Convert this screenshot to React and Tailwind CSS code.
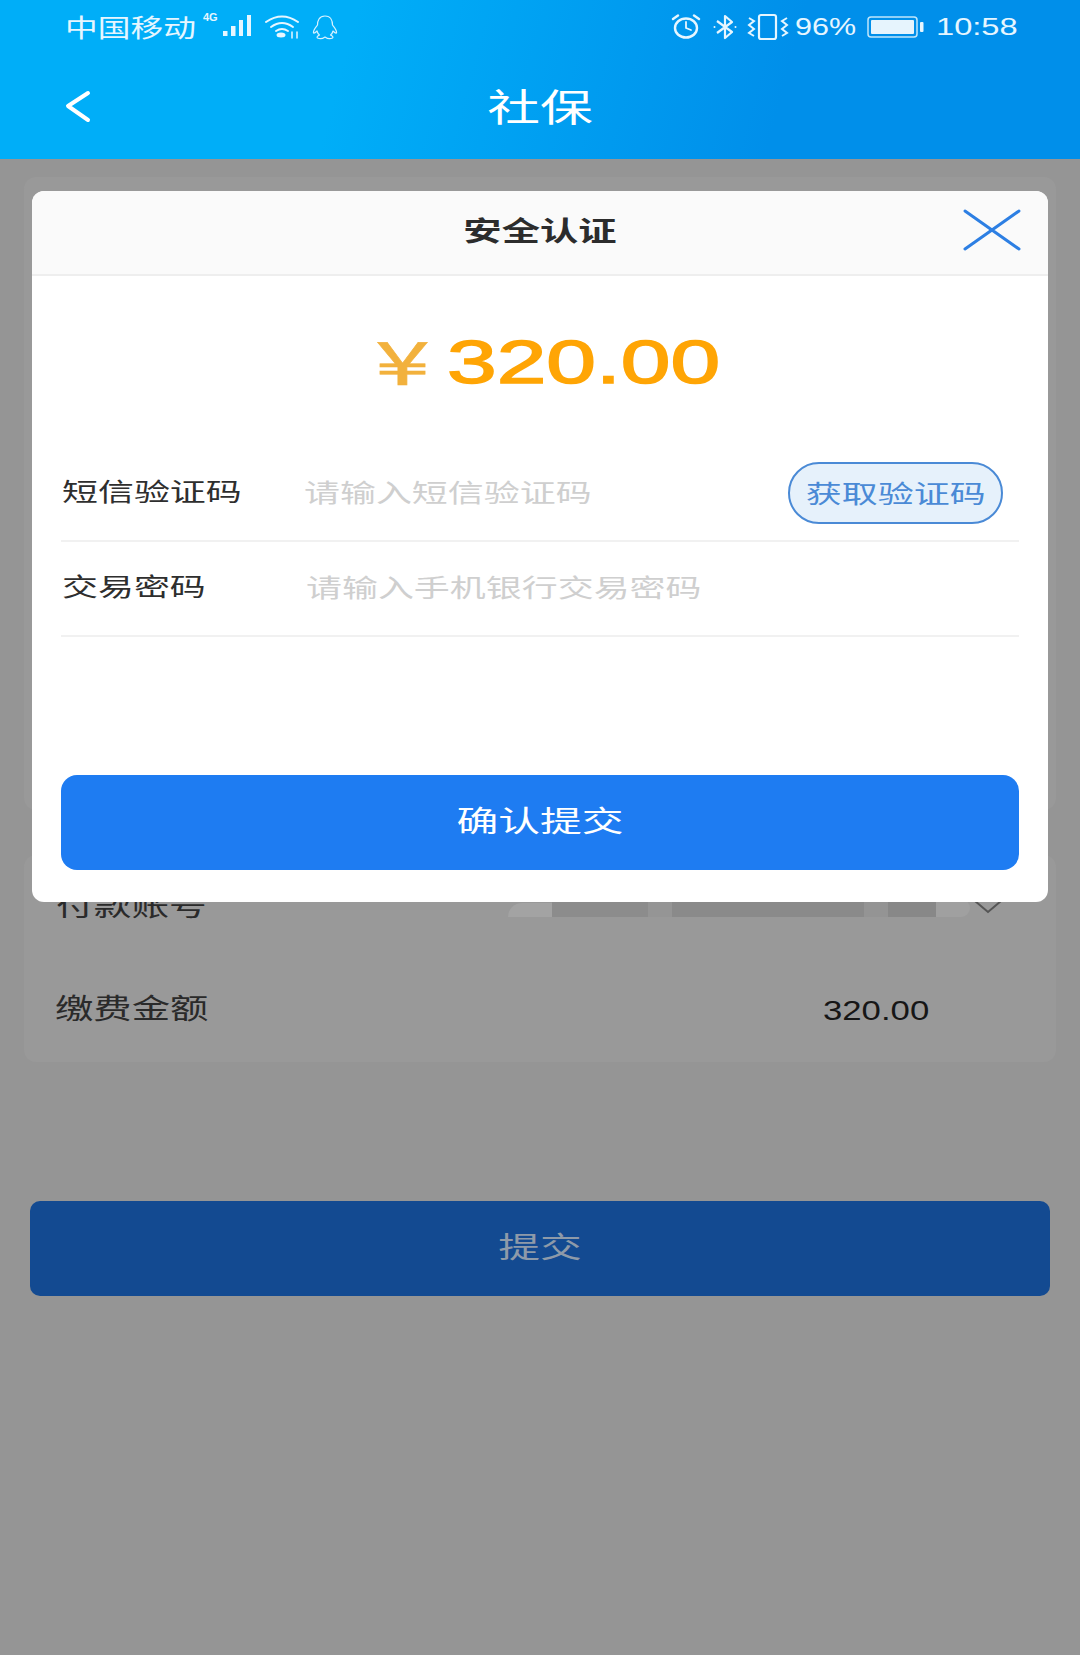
const CJK = "font-['Noto_Sans_CJK_SC','Noto_Sans',sans-serif]";

function SignalIcon() {
  return (
    <svg width="50" height="30" viewBox="0 0 50 30" fill="none">
      <text x="0" y="11" fontSize="11" fontWeight="700" fill="#e6f6ff" fontFamily="Liberation Sans">4G</text>
      <rect x="20" y="21" width="4.5" height="5" fill="#e6f6ff" />
      <rect x="28" y="16" width="4.5" height="10" fill="#e6f6ff" />
      <rect x="36" y="10" width="4" height="16" fill="#e6f6ff" />
      <rect x="44" y="5" width="4" height="21" fill="#e6f6ff" />
    </svg>
  );
}

function WifiIcon() {
  return (
    <svg width="38" height="26" viewBox="0 0 38 26" fill="none" stroke="#e6f6ff" strokeWidth="2" strokeLinecap="round">
      <path d="M2 8 Q18 -3 34 8" />
      <path d="M7 13 Q18 5 29 13" />
      <path d="M12 17 Q18 13 24 17" />
      <ellipse cx="17" cy="21" rx="4.5" ry="2.5" fill="#e6f6ff" stroke="none" />
      <path d="M28 18 L28 24 M33 18 L33 24" strokeWidth="1.5" />
    </svg>
  );
}

function QqIcon() {
  return (
    <svg width="28" height="26" viewBox="0 0 28 26" fill="none" stroke="#d9f2ff" strokeWidth="1.2" strokeLinejoin="round">
      <path d="M14 2 C8 2 6.5 7 6.5 11 C5 13 2 16 2.5 19 C4 19.5 5 18 6 17 C6.5 19 7 20 8.5 21 C6.5 22 5.5 23 6.5 24 C8.5 25 12 24.5 14 23 C16 24.5 19.5 25 21.5 24 C22.5 23 21.5 22 19.5 21 C21 20 21.5 19 22 17 C23 18 24 19.5 25.5 19 C26 16 23 13 21.5 11 C21.5 7 20 2 14 2 Z" />
    </svg>
  );
}

function AlarmIcon() {
  return (
    <svg width="30" height="26" viewBox="0 0 30 26" fill="none" stroke="#e6f6ff" strokeWidth="2.4" strokeLinecap="round">
      <ellipse cx="15" cy="14" rx="11" ry="9.5" />
      <path d="M15 8 L15 14 L20 16" strokeWidth="1.8" />
      <path d="M2 5 L7 1.5 M28 5 L23 1.5" />
    </svg>
  );
}

function BluetoothIcon() {
  return (
    <svg width="24" height="26" viewBox="0 0 24 26" fill="none" stroke="#e6f6ff" strokeWidth="2.2" strokeLinejoin="round">
      <path d="M4 7 L19 18 L12 24 L12 2 L19 8 L4 19" />
      <circle cx="1.5" cy="13" r="1" fill="#e6f6ff" stroke="none" />
      <circle cx="22.5" cy="13" r="1" fill="#e6f6ff" stroke="none" />
    </svg>
  );
}

function VibrateIcon() {
  return (
    <svg width="42" height="28" viewBox="0 0 42 28" fill="none" stroke="#e6f6ff" strokeWidth="2.2">
      <rect x="12" y="2" width="17" height="24" rx="2" />
      <path d="M2 5 L7 8 L2 12 L7 16 L2 20 L7 23" strokeWidth="2" />
      <path d="M40 5 L35 8 L40 12 L35 16 L40 20 L35 23" strokeWidth="2" />
    </svg>
  );
}

function BatteryIcon() {
  return (
    <svg width="58" height="22" viewBox="0 0 58 22" fill="none">
      <rect x="1" y="1" width="49" height="20" rx="3" stroke="#bfe6fb" strokeWidth="1.5" />
      <rect x="4" y="4" width="43" height="14" rx="1" fill="#e6f4fd" />
      <rect x="53" y="6" width="3.5" height="10" rx="1" fill="#e6f6ff" />
    </svg>
  );
}

function Stretched({ className = '', children }) {
  return <span className={`inline-block whitespace-nowrap ${className}`}>{children}</span>;
}

function FormRow({ label, placeholder, phLeft, children }) {
  return (
    <div className="relative flex h-[95px] items-center border-b-2 border-[#f1f1f1] pb-[7px]">
      <Stretched className={`ml-[1px] origin-left scale-x-[1.41] text-[25.5px] text-[#2e2e2e] ${CJK}`}>{label}</Stretched>
      <span
        className={`absolute top-[44px] origin-left -translate-y-1/2 scale-x-[1.41] whitespace-nowrap text-[25.5px] text-[#cfcfcf] ${phLeft} ${CJK}`}
      >
        {placeholder}
      </span>
      {children}
    </div>
  );
}

const mosaic = [
  'w-[96px] bg-[#8c8c8c]',
  'w-[24px] bg-[#959595]',
  'w-[192px] bg-[#8a8a8a]',
  'w-[24px] bg-[#949494]',
  'w-[48px] bg-[#888888]',
  'w-[34px] rounded-r-[14px] bg-[#a0a0a0]',
];

export default function App() {
  return (
    <div className={`relative h-[1655px] w-[1080px] overflow-hidden bg-[#959595] ${CJK}`}>
      <header className="flex h-[159px] flex-col bg-linear-[105deg,#00aef8_32%,#008fea_72%] px-[65px]">
        <div className="flex h-[54px] items-center justify-between">
          <div className="flex items-center">
            <Stretched className="w-[133px] origin-left scale-x-[1.31] text-[25px] text-[#e6f6ff]">中国移动</Stretched>
            <span className="-mt-[4px] ml-[5px] flex"><SignalIcon /></span>
            <span className="ml-[11px] flex"><WifiIcon /></span>
            <span className="ml-[9px] flex"><QqIcon /></span>
          </div>
          <div className="-mr-[3px] flex items-center font-['Liberation_Sans',sans-serif] text-[#e6f6ff]">
            <AlarmIcon />
            <span className="ml-[12px] flex"><BluetoothIcon /></span>
            <span className="ml-[10px] flex"><VibrateIcon /></span>
            <Stretched className="ml-[6px] w-[61px] origin-left scale-x-[1.27] text-[24px]">96%</Stretched>
            <span className="ml-[11px] flex"><BatteryIcon /></span>
            <Stretched className="ml-[11px] w-[82px] origin-left scale-x-[1.36] text-[24px]">10:58</Stretched>
          </div>
        </div>
        <div className="relative flex flex-1 items-center justify-center pb-[5px]">
          <svg className="absolute left-0 top-[36px]" width="26" height="34" viewBox="0 0 26 34" fill="none" stroke="#ffffff" strokeWidth="4" strokeLinecap="round" strokeLinejoin="round">
            <path d="M23 3 L3 16 L23 30" />
          </svg>
          <Stretched className="scale-x-[1.39] text-[38px] text-white">社保</Stretched>
        </div>
      </header>

      <main className="flex flex-col px-[24px] pt-[18px]">
        <section className="h-[633px] rounded-[12px] bg-[#999999]" />
        <section className="relative mt-[45px] h-[207px] rounded-[12px] bg-[#999999]">
          <Stretched className="absolute left-[32px] top-[30px] origin-left scale-x-[1.45] text-[26px] text-[#2a2a2a]">付款账号</Stretched>
          <div className="absolute left-[484px] top-[48px] h-[14px] w-[44px] rounded-tl-[20px] bg-[#a3a3a3]" />
          <div className="absolute left-[528px] top-[44px] flex h-[18px]">
            {mosaic.map((block, i) => (
              <div key={i} className={block} />
            ))}
          </div>
          <svg className="absolute left-[949px] top-[42px]" width="30" height="20" viewBox="0 0 30 20" fill="none" stroke="#555555" strokeWidth="2">
            <path d="M2 4 L15 15 L28 4" />
          </svg>
          <Stretched className="absolute left-[31px] top-[131px] origin-left scale-x-[1.37] text-[28px] text-[#2a2a2a]">缴费金额</Stretched>
          <Stretched className="absolute left-[799px] top-[135px] origin-left scale-x-[1.24] font-['Liberation_Sans',sans-serif] text-[28px] text-[#161616]">320.00</Stretched>
        </section>
        <button
          type="button"
          className="mx-[6px] mt-[139px] flex h-[95px] items-center justify-center rounded-[10px] bg-[#134a91] pb-[6px] text-[#8e9aa9]"
        >
          <Stretched className="scale-x-[1.44] text-[29px]">提交</Stretched>
        </button>
      </main>

      <div className="absolute left-[32px] top-[191px] flex h-[711px] w-[1016px] flex-col overflow-hidden rounded-[12px] bg-white">
        <div className="relative flex h-[85px] shrink-0 items-center justify-center border-b-2 border-[#eeeeee] bg-[#fafafa] pb-[5px]">
          <Stretched className="scale-x-[1.42] text-[27px] font-bold text-[#2c2c2c]">安全认证</Stretched>
          <svg className="absolute right-[27px] top-[18px]" width="58" height="42" viewBox="0 0 58 42" fill="none" stroke="#2d7fe3" strokeWidth="3" strokeLinecap="round">
            <path d="M2 2 L56 40 M56 2 L2 40" />
          </svg>
        </div>

        <div className="flex h-[171px] shrink-0 items-center justify-center pl-[13px] font-['Liberation_Sans',sans-serif]">
          <span className="mr-[19px] w-[53px] text-[60px] leading-none text-[#f2b13c]">
            <Stretched className={`origin-left scale-x-[1.65] [-webkit-text-stroke:0.5px_#f2b13c] ${CJK}`}>¥</Stretched>
          </span>
          <Stretched className="w-[271px] origin-left scale-x-[1.44] text-[62px] leading-none text-[#ffa505] [-webkit-text-stroke:1.5px_#ffa505]">320.00</Stretched>
        </div>

        <div className="px-[29px]">
          <FormRow label="短信验证码" placeholder="请输入短信验证码" phLeft="left-[243px]">
            <button
              type="button"
              className="absolute right-[16px] top-[15px] flex h-[62px] w-[215px] items-center justify-center rounded-full border-2 border-[#4a8ad6] bg-[#e6f1fb] pb-[2px] text-[#4a8ad6]"
            >
              <Stretched className="scale-x-[1.41] text-[25.5px]">获取验证码</Stretched>
            </button>
          </FormRow>
          <FormRow label="交易密码" placeholder="请输入手机银行交易密码" phLeft="left-[245px]" />
        </div>

        <button
          type="button"
          className="mx-[29px] mt-[138px] flex h-[95px] shrink-0 items-center justify-center rounded-[16px] bg-[#1e7cf2] pb-[6px] text-white"
        >
          <Stretched className="scale-x-[1.44] text-[29px]">确认提交</Stretched>
        </button>
      </div>
    </div>
  );
}
